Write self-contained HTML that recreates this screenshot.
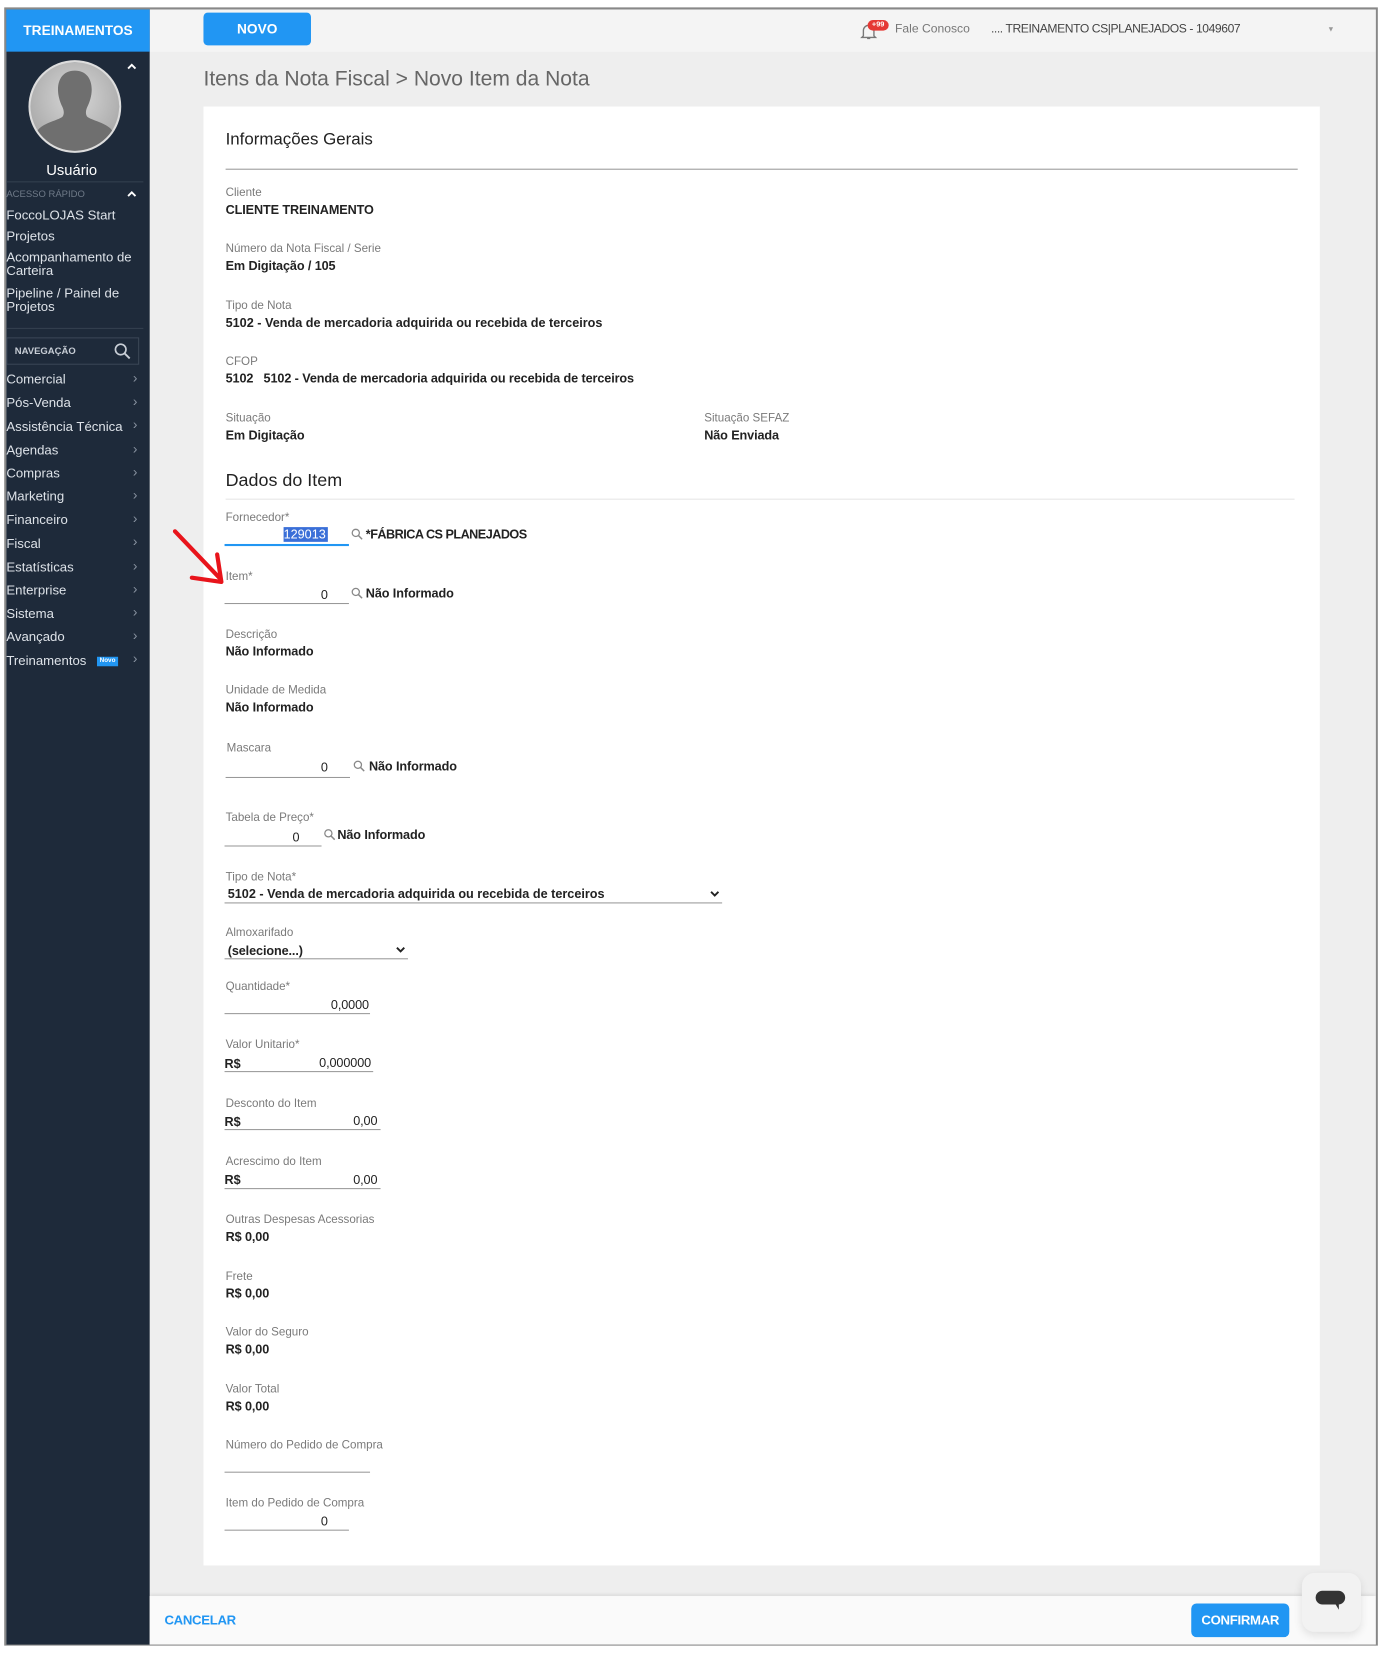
<!DOCTYPE html>
<html><head><meta charset="utf-8">
<style>
*{margin:0;padding:0;box-sizing:border-box}
html,body{width:1381px;height:1654px;overflow:hidden;background:#fff;font-family:"Liberation Sans",sans-serif}
#w{position:absolute;left:0;top:0;width:1310px;height:1569px;transform:scale(1.0542);transform-origin:0 0}
.a{position:absolute;white-space:nowrap}
.lb{font-size:11px;color:#7a7a7a;line-height:14px}
.v{font-size:12px;color:#222;line-height:14px;font-weight:bold;letter-spacing:-0.1px}
.ul{position:absolute;height:1px;background:#999}
.sb{font-size:12.5px;color:#dde2e8;line-height:14px}
.srch{position:absolute;width:11px;height:11px}
</style></head><body>
<div id="w">
<div class="a" style="left:4px;top:7px;width:1303px;height:1554px;border:2px solid #888;border-bottom-width:1px"></div>
<div class="a" style="left:142px;top:9px;width:1163px;height:40px;background:#f4f4f4"></div>
<div class="a" style="left:142px;top:49px;width:1163px;height:1465px;background:#eeeeee"></div>
<div class="a" style="left:6px;top:9px;width:136px;height:1551px;background:#1e2a3a"></div>
<div class="a" style="left:6px;top:9px;width:136px;height:40px;background:#2196f3;color:#fff;font-weight:bold;font-size:13px;line-height:40px;text-align:center">TREINAMENTOS</div>
<div class="a" style="left:27px;top:57px;width:88px;height:88px;border-radius:50%;border:2px solid #ddd;background:radial-gradient(circle at 50% 40%,#d8d8d8,#9a9a9a);overflow:hidden">
<svg width="88" height="88" viewBox="0 0 88 88" style="position:absolute;left:-2px;top:-2px"><path d="M44 10c-11 0-16 8-16 18 0 6 2 12 4 16 2 4 2 8 0 10-6 4-20 6-24 14-2 4-2 12-2 20h76c0-8 0-16-2-20-4-8-18-10-24-14-2-2-2-6 0-10 2-4 4-10 4-16 0-10-5-18-16-18z" fill="#6f6f6f"/></svg></div>
<svg class="a" style="left:120px;top:59px" width="10" height="8" viewBox="0 0 10 8"><path d="M1.5 6l3.5-3.5 3.5 3.5" fill="none" stroke="#fff" stroke-width="1.8"/></svg>
<div class="a" style="left:6px;top:153px;width:124px;text-align:center;color:#fff;font-size:14px">Usuário</div>
<div class="a" style="left:6px;top:172px;width:130px;height:1px;background:#34404f"></div>
<div class="a" style="left:6px;top:179px;font-size:9px;color:#6f7a88">ACESSO RÁPIDO</div>
<svg class="a" style="left:120px;top:180px" width="10" height="8" viewBox="0 0 10 8"><path d="M1.5 6l3.5-3.5 3.5 3.5" fill="none" stroke="#fff" stroke-width="1.8"/></svg>
<div class="a sb" style="left:6px;top:197px">FoccoLOJAS Start</div>
<div class="a sb" style="left:6px;top:217px">Projetos</div>
<div class="a sb" style="left:6px;top:238px;line-height:13px">Acompanhamento de<br>Carteira</div>
<div class="a sb" style="left:6px;top:272px;line-height:13px">Pipeline / Painel de<br>Projetos</div>
<div class="a" style="left:6px;top:311px;width:130px;height:1px;background:#34404f"></div>
<div class="a" style="left:6px;top:320px;width:126px;height:26px;border:1px solid #3a4656"></div>
<div class="a" style="left:14px;top:328px;font-size:9px;font-weight:bold;color:#c8ced6">NAVEGAÇÃO</div>
<svg class="a" style="left:108px;top:325px" width="16" height="16" viewBox="0 0 16 16"><circle cx="6.5" cy="6.5" r="5" fill="none" stroke="#c8ced6" stroke-width="1.6"/><path d="M10 10l5 5" stroke="#c8ced6" stroke-width="1.8"/></svg>
<div class="a sb" style="left:6px;top:353px">Comercial</div>
<div class="a sb" style="left:6px;top:375px">Pós-Venda</div>
<div class="a sb" style="left:6px;top:398px">Assistência Técnica</div>
<div class="a sb" style="left:6px;top:420px">Agendas</div>
<div class="a sb" style="left:6px;top:442px">Compras</div>
<div class="a sb" style="left:6px;top:464px">Marketing</div>
<div class="a sb" style="left:6px;top:486px">Financeiro</div>
<div class="a sb" style="left:6px;top:509px">Fiscal</div>
<div class="a sb" style="left:6px;top:531px">Estatísticas</div>
<div class="a sb" style="left:6px;top:553px">Enterprise</div>
<div class="a sb" style="left:6px;top:575px">Sistema</div>
<div class="a sb" style="left:6px;top:597px">Avançado</div>
<div class="a sb" style="left:6px;top:620px">Treinamentos</div>
<div class="a" style="left:92px;top:623px;width:20px;height:9px;background:#2196f3;color:#fff;font-size:6px;line-height:9px;text-align:center;font-weight:bold">Novo</div>
<div class="a" style="left:126px;top:348px;font-size:13px;color:#8a94a2;line-height:22.2px">&#8250;<br>&#8250;<br>&#8250;<br>&#8250;<br>&#8250;<br>&#8250;<br>&#8250;<br>&#8250;<br>&#8250;<br>&#8250;<br>&#8250;<br>&#8250;<br>&#8250;</div>
<div class="a" style="left:193px;top:12px;width:102px;height:31px;background:#2196f3;border-radius:4px;color:#fff;font-weight:bold;font-size:13px;line-height:31px;text-align:center">NOVO</div>
<svg class="a" style="left:815px;top:21px" width="18" height="18" viewBox="0 0 18 18"><path d="M4 13V8a5 5 0 0 1 10 0v5l1.5 1.5h-13z M7.5 15.5h3" fill="none" stroke="#777" stroke-width="1.3"/></svg>
<div class="a" style="left:823px;top:19px;width:20px;height:10px;border-radius:5px;background:#e53935;color:#fff;font-size:7px;line-height:10px;text-align:center;font-weight:bold">+99</div>
<div class="a" style="left:849px;top:22px;font-size:11.5px;color:#777">Fale Conosco</div>
<div class="a" style="left:940px;top:22px;font-size:11.5px;color:#444;letter-spacing:-0.4px">.... TREINAMENTO CS|PLANEJADOS - 1049607</div>
<div class="a" style="left:1259px;top:25px;font-size:7px;color:#999">&#9660;</div>
<div class="a" style="left:193px;top:64px;font-size:20px;color:#666">Itens da Nota Fiscal &gt; Novo Item da Nota</div>
<div class="a" style="left:193px;top:101px;width:1059px;height:1384px;background:#fff"></div>
<div class="a" style="left:214px;top:124px;font-size:16px;color:#222">Informações Gerais</div>
<div class="a" style="left:214px;top:160px;width:1017px;height:1px;background:#999"></div>
<div class="a lb" style="left:214px;top:176px">Cliente</div>
<div class="a v" style="left:214px;top:192px">CLIENTE TREINAMENTO</div>
<div class="a lb" style="left:214px;top:229px">Número da Nota Fiscal / Serie</div>
<div class="a v" style="left:214px;top:245px">Em Digitação / 105</div>
<div class="a lb" style="left:214px;top:283px">Tipo de Nota</div>
<div class="a v" style="left:214px;top:299px;letter-spacing:0">5102 - Venda de mercadoria adquirida ou recebida de terceiros</div>
<div class="a lb" style="left:214px;top:336px">CFOP</div>
<div class="a v" style="left:214px;top:352px">5102&nbsp;&nbsp; 5102 - Venda de mercadoria adquirida ou recebida de terceiros</div>
<div class="a lb" style="left:214px;top:390px">Situação</div>
<div class="a v" style="left:214px;top:406px">Em Digitação</div>
<div class="a lb" style="left:668px;top:390px">Situação SEFAZ</div>
<div class="a v" style="left:668px;top:406px">Não Enviada</div>
<div class="a" style="left:214px;top:446px;font-size:17px;color:#222">Dados do Item</div>
<div class="a" style="left:214px;top:473px;width:1014px;height:1px;background:#e5e5e5"></div>
<div class="a lb" style="left:214px;top:484px">Fornecedor*</div>
<div class="a" style="left:269px;top:500px;width:42px;height:14px;background:#3a6fd8;color:#fff;font-size:12px;line-height:14px">129013</div>
<div class="ul" style="left:213px;top:516px;width:118px;height:2px;background:#2196f3"></div>
<svg class="srch a" style="left:333px;top:501px" viewBox="0 0 11 11"><circle cx="4.5" cy="4.5" r="3.4" fill="none" stroke="#888" stroke-width="1.2"/><path d="M7 7l3.5 3.5" stroke="#888" stroke-width="1.4"/></svg>
<div class="a v" style="left:347px;top:500px;letter-spacing:-0.5px">*FÁBRICA CS PLANEJADOS</div>
<svg class="a" style="left:160px;top:498px" width="60" height="62" viewBox="0 0 60 62"><path d="M6 6 L48 50" stroke="#e8141b" stroke-width="4" stroke-linecap="round"/><path d="M22 50 L50 54 L46 28" fill="none" stroke="#e8141b" stroke-width="4" stroke-linecap="round" stroke-linejoin="round"/></svg>
<div class="a lb" style="left:214px;top:540px">Item*</div>
<div class="a v" style="left:214px;top:557px;width:97px;text-align:right;font-weight:normal">0</div>
<div class="ul" style="left:213px;top:572px;width:118px"></div>
<svg class="srch a" style="left:333px;top:557px" viewBox="0 0 11 11"><circle cx="4.5" cy="4.5" r="3.4" fill="none" stroke="#888" stroke-width="1.2"/><path d="M7 7l3.5 3.5" stroke="#888" stroke-width="1.4"/></svg>
<div class="a v" style="left:347px;top:556px">Não Informado</div>
<div class="a lb" style="left:214px;top:595px">Descrição</div>
<div class="a v" style="left:214px;top:611px">Não Informado</div>
<div class="a lb" style="left:214px;top:648px">Unidade de Medida</div>
<div class="a v" style="left:214px;top:664px">Não Informado</div>
<div class="a lb" style="left:215px;top:703px">Mascara</div>
<div class="a v" style="left:214px;top:721px;width:97px;text-align:right;font-weight:normal">0</div>
<div class="ul" style="left:214px;top:737px;width:118px"></div>
<svg class="srch a" style="left:335px;top:721px" viewBox="0 0 11 11"><circle cx="4.5" cy="4.5" r="3.4" fill="none" stroke="#888" stroke-width="1.2"/><path d="M7 7l3.5 3.5" stroke="#888" stroke-width="1.4"/></svg>
<div class="a v" style="left:350px;top:720px">Não Informado</div>
<div class="a lb" style="left:214px;top:769px">Tabela de Preço*</div>
<div class="a v" style="left:214px;top:787px;width:70px;text-align:right;font-weight:normal">0</div>
<div class="ul" style="left:213px;top:802px;width:92px"></div>
<svg class="srch a" style="left:307px;top:786px" viewBox="0 0 11 11"><circle cx="4.5" cy="4.5" r="3.4" fill="none" stroke="#888" stroke-width="1.2"/><path d="M7 7l3.5 3.5" stroke="#888" stroke-width="1.4"/></svg>
<div class="a v" style="left:320px;top:785px">Não Informado</div>
<div class="a lb" style="left:214px;top:825px">Tipo de Nota*</div>
<div class="a v" style="left:216px;top:841px;letter-spacing:0">5102 - Venda de mercadoria adquirida ou recebida de terceiros</div>
<svg class="a" style="left:673px;top:844px" width="10" height="8" viewBox="0 0 10 8"><path d="M1.5 2l3.5 3.5 3.5-3.5" fill="none" stroke="#222" stroke-width="1.8"/></svg>
<div class="ul" style="left:213px;top:856px;width:472px"></div>
<div class="a lb" style="left:214px;top:878px">Almoxarifado</div>
<div class="a v" style="left:216px;top:895px">(selecione...)</div>
<svg class="a" style="left:375px;top:897px" width="10" height="8" viewBox="0 0 10 8"><path d="M1.5 2l3.5 3.5 3.5-3.5" fill="none" stroke="#222" stroke-width="1.8"/></svg>
<div class="ul" style="left:213px;top:909px;width:174px"></div>
<div class="a lb" style="left:214px;top:929px">Quantidade*</div>
<div class="a v" style="left:214px;top:946px;width:136px;text-align:right;font-weight:normal">0,0000</div>
<div class="ul" style="left:213px;top:961px;width:138px"></div>
<div class="a lb" style="left:214px;top:984px">Valor Unitario*</div>
<div class="a v" style="left:213px;top:1002px">R$</div>
<div class="a v" style="left:214px;top:1001px;width:138px;text-align:right;font-weight:normal">0,000000</div>
<div class="ul" style="left:213px;top:1016px;width:141px"></div>
<div class="a lb" style="left:214px;top:1040px">Desconto do Item</div>
<div class="a v" style="left:213px;top:1057px">R$</div>
<div class="a v" style="left:214px;top:1056px;width:144px;text-align:right;font-weight:normal">0,00</div>
<div class="ul" style="left:213px;top:1071px;width:148px"></div>
<div class="a lb" style="left:214px;top:1095px">Acrescimo do Item</div>
<div class="a v" style="left:213px;top:1112px">R$</div>
<div class="a v" style="left:214px;top:1112px;width:144px;text-align:right;font-weight:normal">0,00</div>
<div class="ul" style="left:213px;top:1127px;width:148px"></div>
<div class="a lb" style="left:214px;top:1150px">Outras Despesas Acessorias</div>
<div class="a v" style="left:214px;top:1166px">R$ 0,00</div>
<div class="a lb" style="left:214px;top:1204px">Frete</div>
<div class="a v" style="left:214px;top:1220px">R$ 0,00</div>
<div class="a lb" style="left:214px;top:1257px">Valor do Seguro</div>
<div class="a v" style="left:214px;top:1273px">R$ 0,00</div>
<div class="a lb" style="left:214px;top:1311px">Valor Total</div>
<div class="a v" style="left:214px;top:1327px">R$ 0,00</div>
<div class="a lb" style="left:214px;top:1364px">Número do Pedido de Compra</div>
<div class="ul" style="left:213px;top:1396px;width:138px"></div>
<div class="a lb" style="left:214px;top:1419px">Item do Pedido de Compra</div>
<div class="a v" style="left:214px;top:1436px;width:97px;text-align:right;font-weight:normal">0</div>
<div class="ul" style="left:213px;top:1451px;width:118px"></div>
<div class="a" style="left:142px;top:1514px;width:1163px;height:46px;background:#fafafa;box-shadow:0 -2px 3px rgba(0,0,0,0.08)"></div>
<div class="a" style="left:156px;top:1530px;font-size:12.5px;font-weight:bold;color:#2196f3;letter-spacing:-0.3px">CANCELAR</div>
<div class="a" style="left:1130px;top:1521px;width:93px;height:32px;background:#2196f3;border-radius:5px;color:#fff;font-size:12.5px;font-weight:bold;line-height:32px;text-align:center;letter-spacing:-0.3px">CONFIRMAR</div>
<div class="a" style="left:1235px;top:1492px;width:56px;height:56px;background:#f2f2f2;border-radius:12px;box-shadow:0 3px 8px rgba(0,0,0,0.1)"></div>
<svg class="a" style="left:1247px;top:1508px" width="30" height="22" viewBox="0 0 30 22"><rect x="1" y="1" width="28" height="13" rx="6.5" fill="#333"/><path d="M20 14l3 0 0 5z" fill="#333"/></svg>
</div>
</body></html>
